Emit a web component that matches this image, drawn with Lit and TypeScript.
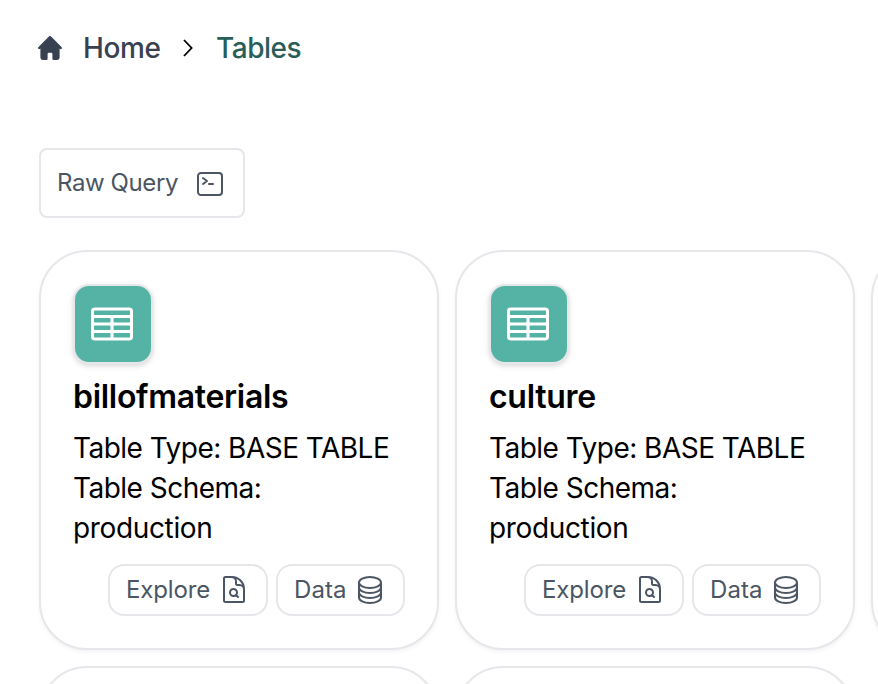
import { LitElement, html, css, svg, nothing } from "lit";
import { customElement, property } from "lit/decorators.js";

const ICONS = {
  table: "M3.375 19.5h17.25m-17.25 0a1.125 1.125 0 0 1-1.125-1.125M3.375 19.5h7.5c.621 0 1.125-.504 1.125-1.125m-9.75 0V5.625m0 12.75v-1.5c0-.621.504-1.125 1.125-1.125m18.375 2.625V5.625m0 12.75c0 .621-.504 1.125-1.125 1.125m1.125-1.125v-1.5c0-.621-.504-1.125-1.125-1.125m0 3.75h-7.5A1.125 1.125 0 0 1 12 18.375m9.75-12.75c0-.621-.504-1.125-1.125-1.125H3.375c-.621 0-1.125.504-1.125 1.125m19.5 0v1.5c0 .621-.504 1.125-1.125 1.125M2.25 5.625v1.5c0 .621.504 1.125 1.125 1.125m0 0h17.25m-17.25 0h7.5c.621 0 1.125.504 1.125 1.125M3.375 8.25c-.621 0-1.125.504-1.125 1.125v1.5c0 .621.504 1.125 1.125 1.125m17.25-3.75h-7.5c-.621 0-1.125.504-1.125 1.125m8.625-1.125c.621 0 1.125.504 1.125 1.125v1.5c0 .621-.504 1.125-1.125 1.125m-17.25 0h7.5m-7.5 0c-.621 0-1.125.504-1.125 1.125v1.5c0 .621.504 1.125 1.125 1.125M12 10.875v-1.5m0 1.5c0 .621-.504 1.125-1.125 1.125M12 10.875c0 .621.504 1.125 1.125 1.125m-2.25 0c.621 0 1.125.504 1.125 1.125M13.125 12h7.5m-7.5 0c-.621 0-1.125.504-1.125 1.125M20.625 12c.621 0 1.125.504 1.125 1.125v1.5c0 .621-.504 1.125-1.125 1.125m-17.25 0h7.5M12 14.625v-1.5m0 1.5c0 .621-.504 1.125-1.125 1.125M12 14.625c0 .621.504 1.125 1.125 1.125m-2.25 0c.621 0 1.125.504 1.125 1.125m0 1.5v-1.5m0 0c0-.621.504-1.125 1.125-1.125m0 0h7.5",
  search: "M19.5 14.25v-2.625a3.375 3.375 0 0 0-3.375-3.375h-1.5A1.125 1.125 0 0 1 13.5 7.125v-1.5a3.375 3.375 0 0 0-3.375-3.375H8.25m5.231 13.481L15 17.25m-4.5-15H5.625c-.621 0-1.125.504-1.125 1.125v16.5c0 .621.504 1.125 1.125 1.125h12.75c.621 0 1.125-.504 1.125-1.125V11.25a9 9 0 0 0-9-9Zm3.75 11.625a2.625 2.625 0 1 1-5.25 0 2.625 2.625 0 0 1 5.25 0Z",
  stack: "M20.25 6.375c0 2.278-3.694 4.125-8.25 4.125S3.75 8.653 3.75 6.375m16.5 0c0-2.278-3.694-4.125-8.25-4.125S3.75 4.097 3.75 6.375m16.5 0v11.25c0 2.278-3.694 4.125-8.25 4.125s-8.25-1.847-8.25-4.125V6.375m16.5 0v3.75m-16.5-3.75v3.75m16.5 0v3.75C20.25 16.153 16.556 18 12 18s-8.25-1.847-8.25-4.125v-3.75m16.5 0c0 2.278-3.694 4.125-8.25 4.125s-8.25-1.847-8.25-4.125",
  terminal: "m6.75 7.5 3 2.25-3 2.25m4.5 0h3m-9 8.25h13.5A2.25 2.25 0 0 0 21 18V6a2.25 2.25 0 0 0-2.25-2.25H5.25A2.25 2.25 0 0 0 3 6v12a2.25 2.25 0 0 0 2.25 2.25Z",
};

const icon = (name: keyof typeof ICONS, size: number) => html`
  <svg width=${size} height=${size} viewBox="0 0 24 24" fill="none" stroke="currentColor"
    stroke-width="1.5" stroke-linecap="round" stroke-linejoin="round">
    ${svg`<path d=${ICONS[name]}></path>`}
  </svg>`;

@customElement("table-card")
class TableCard extends LitElement {
  @property() name = "";
  @property() schema = "production";

  static styles = css`
    :host {
      box-sizing: border-box;
      display: flex;
      flex-direction: column;
      width: 400px;
      height: 400px;
      padding: 32px;
      border: 2px solid #e5e7eb;
      border-radius: 48px;
      background: #fff;
      box-shadow: 0 2px 4px rgba(0, 0, 0, 0.05);
      color: #000;
    }
    svg { display: block; flex: none; }
    .tile {
      box-sizing: border-box;
      display: flex;
      align-items: center;
      width: 80px;
      height: 80px;
      padding-left: 13px;
      border: 2px solid #e5e7eb;
      border-radius: 16px;
      background: #55b3a6;
      color: #fff;
      box-shadow: 0 2px 6px rgba(0, 0, 0, 0.1), 0 2px 4px rgba(0, 0, 0, 0.06);
    }
    .title {
      margin: 13px 0 0;
      font-size: 32px;
      line-height: 40px;
      font-weight: 600;
      letter-spacing: -0.3px;
      white-space: nowrap;
    }
    .meta {
      margin-top: 11px;
      font-size: 28px;
      line-height: 40px;
      letter-spacing: -0.52px;
    }
    .line { white-space: nowrap; }
    .schema { letter-spacing: -0.35px; }
    .actions {
      display: flex;
      justify-content: flex-end;
      gap: 8px;
      margin-top: 16px;
    }
    .button {
      box-sizing: border-box;
      display: flex;
      align-items: center;
      justify-content: space-between;
      height: 52px;
      padding: 0 16px;
      border: 2px solid #e5e7eb;
      border-radius: 16px;
      color: #4b5563;
      font-size: 24px;
      letter-spacing: -0.15px;
      white-space: nowrap;
    }
    .button span { margin-bottom: 2px; }
    .explore { width: 160px; }
    .data { width: 129px; padding-right: 17px; letter-spacing: 0.1px; }
  `;

  render() {
    if (!this.name) return nothing;
    return html`
      <div class="tile">${icon("table", 48)}</div>
      <h2 class="title">${this.name}</h2>
      <div class="meta">
        <div class="line">Table Type: BASE TABLE</div>
        <div class="line">Table Schema:</div>
        <div class="line schema">${this.schema}</div>
      </div>
      <div class="actions">
        <div class="button explore"><span>Explore</span>${icon("search", 32)}</div>
        <div class="button data"><span>Data</span>${icon("stack", 32)}</div>
      </div>`;
  }
}

@customElement("app-root")
class AppRoot extends LitElement {
  static styles = css`
    :host {
      box-sizing: border-box;
      display: block;
      width: 100%;
      height: 684px;
      overflow: hidden;
      padding: 28px 0 0 39px;
      background: #fff;
      font-family: Inter, "Liberation Sans", sans-serif;
    }
    svg { display: block; flex: none; }
    .crumbs {
      display: flex;
      align-items: center;
      height: 40px;
      font-size: 28px;
      line-height: 40px;
      font-weight: 500;
      color: #374151;
    }
    .house { margin-left: -1px; }
    .home { width: 99px; margin-left: 21px; letter-spacing: -0.4px; }
    .chevron { color: #000; }
    .current { margin-left: 22px; color: #285e57; letter-spacing: -0.5px; }
    .raw {
      box-sizing: border-box;
      display: flex;
      align-items: center;
      justify-content: space-between;
      width: 206px;
      height: 70px;
      margin-top: 80px;
      padding: 0 17px 0 16px;
      border: 2px solid #e5e7eb;
      border-radius: 8px;
      color: #4b5563;
      font-size: 24px;
      letter-spacing: -0.4px;
      white-space: nowrap;
    }
    .raw span { margin-bottom: 2px; }
    .raw svg { margin-top: 2px; }
    .grid {
      display: grid;
      grid-template-columns: repeat(3, 400px);
      gap: 16px;
      margin-top: 32px;
    }
  `;

  render() {
    return html`
      <nav class="crumbs">
        <svg class="house" width="24" height="24" viewBox="0 0 20 20" fill="currentColor">
          <path d="m19.707 9.293-2-2-7-7a1 1 0 0 0-1.414 0l-7 7-2 2a1 1 0 0 0 1.414 1.414L2 10.414V18a2 2 0 0 0 2 2h3a1 1 0 0 0 1-1v-4a1 1 0 0 1 1-1h2a1 1 0 0 1 1 1v4a1 1 0 0 0 1 1h3a2 2 0 0 0 2-2v-7.586l.293.293a1 1 0 0 0 1.414-1.414Z"></path>
        </svg>
        <span class="home">Home</span>
        <svg class="chevron" width="12" height="18" viewBox="0 0 12 18" fill="none" stroke="currentColor" stroke-width="1.8">
          <path d="m2 1 7.6 8L2 17"></path>
        </svg>
        <span class="current">Tables</span>
      </nav>
      <div class="raw"><span>Raw Query</span>${icon("terminal", 32)}</div>
      <div class="grid">
        ${["billofmaterials", "culture", "", "", "", ""].map(
          (name) => html`<table-card name=${name}></table-card>`
        )}
      </div>`;
  }
}
